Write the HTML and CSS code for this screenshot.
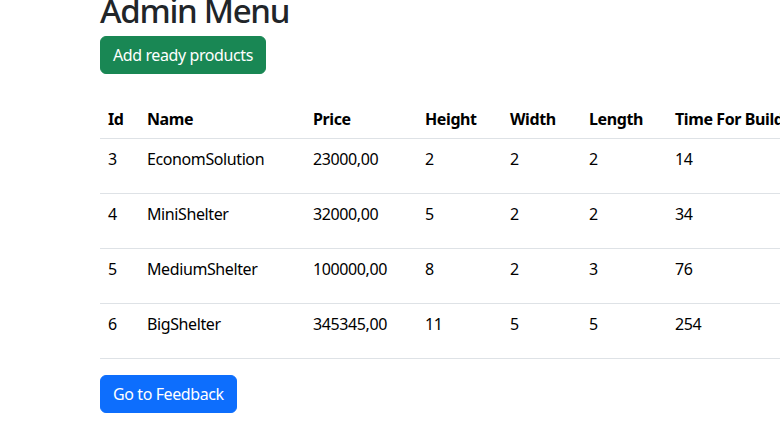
FILE: index.html
```html
<!DOCTYPE html>
<html>
<head>
<meta charset="utf-8">
<link rel="stylesheet" href="styles.css">
</head>
<body>
<div class="container">
  <h1 class="title">Admin Menu</h1>
  <button class="btn btn-green">Add ready products</button>
  <div class="table-wrap">
    <table class="table">
      <thead>
        <tr>
          <th class="c-id">Id</th>
          <th class="c-name">Name</th>
          <th class="c-price">Price</th>
          <th class="c-h">Height</th>
          <th class="c-w">Width</th>
          <th class="c-l">Length</th>
          <th class="c-t">Time For Build</th>
        </tr>
      </thead>
      <tbody>
        <tr><td>3</td><td>EconomSolution</td><td>23000,00</td><td>2</td><td>2</td><td>2</td><td>14</td></tr>
        <tr><td>4</td><td>MiniShelter</td><td>32000,00</td><td>5</td><td>2</td><td>2</td><td>34</td></tr>
        <tr><td>5</td><td>MediumShelter</td><td>100000,00</td><td>8</td><td>2</td><td>3</td><td>76</td></tr>
        <tr><td>6</td><td>BigShelter</td><td>345345,00</td><td>11</td><td>5</td><td>5</td><td>254</td></tr>
      </tbody>
    </table>
  </div>
  <button class="btn btn-blue">Go to Feedback</button>
</div>
</body>
</html>
```
FILE: styles.css
```css
html, body {
  margin: 0;
  padding: 0;
  background: #fff;
  overflow: hidden;
}
body {
  font-family: "Noto Sans", "Open Sans", sans-serif;
  font-size: 16px;
  line-height: 24px;
  letter-spacing: -0.4px;
  color: #212529;
}
.container {
  padding-left: 100px;
}
.title {
  font-size: 33px;
  font-weight: 500;
  line-height: 40px;
  letter-spacing: -1.3px;
  margin: -9px 0 5px 0;
  color: #212529;
}
.btn {
  display: inline-block;
  font-family: inherit;
  font-size: 16px;
  line-height: 24px;
  letter-spacing: -0.4px;
  padding: 6px 12px;
  border: 1px solid transparent;
  border-radius: 6px;
  color: #fff;
  cursor: pointer;
}
.btn-green {
  background: #198754;
  border-color: #198754;
}
.btn-blue {
  background: #0d6efd;
  border-color: #0d6efd;
}
.table-wrap {
  margin-top: 25px;
  width: 1000px;
}
.table {
  border-collapse: collapse;
  table-layout: fixed;
  width: 1000px;
  margin-bottom: 16px;
  color: #000;
}
.table th, .table td {
  text-align: left;
  vertical-align: top;
  padding: 8px 8px;
  border-bottom: 1px solid #dee2e6;
  white-space: nowrap;
}
.table th {
  font-weight: 700;
  padding-bottom: 7px;
}
.table td {
  padding-bottom: 22px;
}
.c-id { width: 23px; }
.c-name { width: 150px; }
.c-price { width: 96px; }
.c-h { width: 69px; }
.c-w { width: 63px; }
.c-l { width: 70px; }
.c-t { width: 417px; }
```
